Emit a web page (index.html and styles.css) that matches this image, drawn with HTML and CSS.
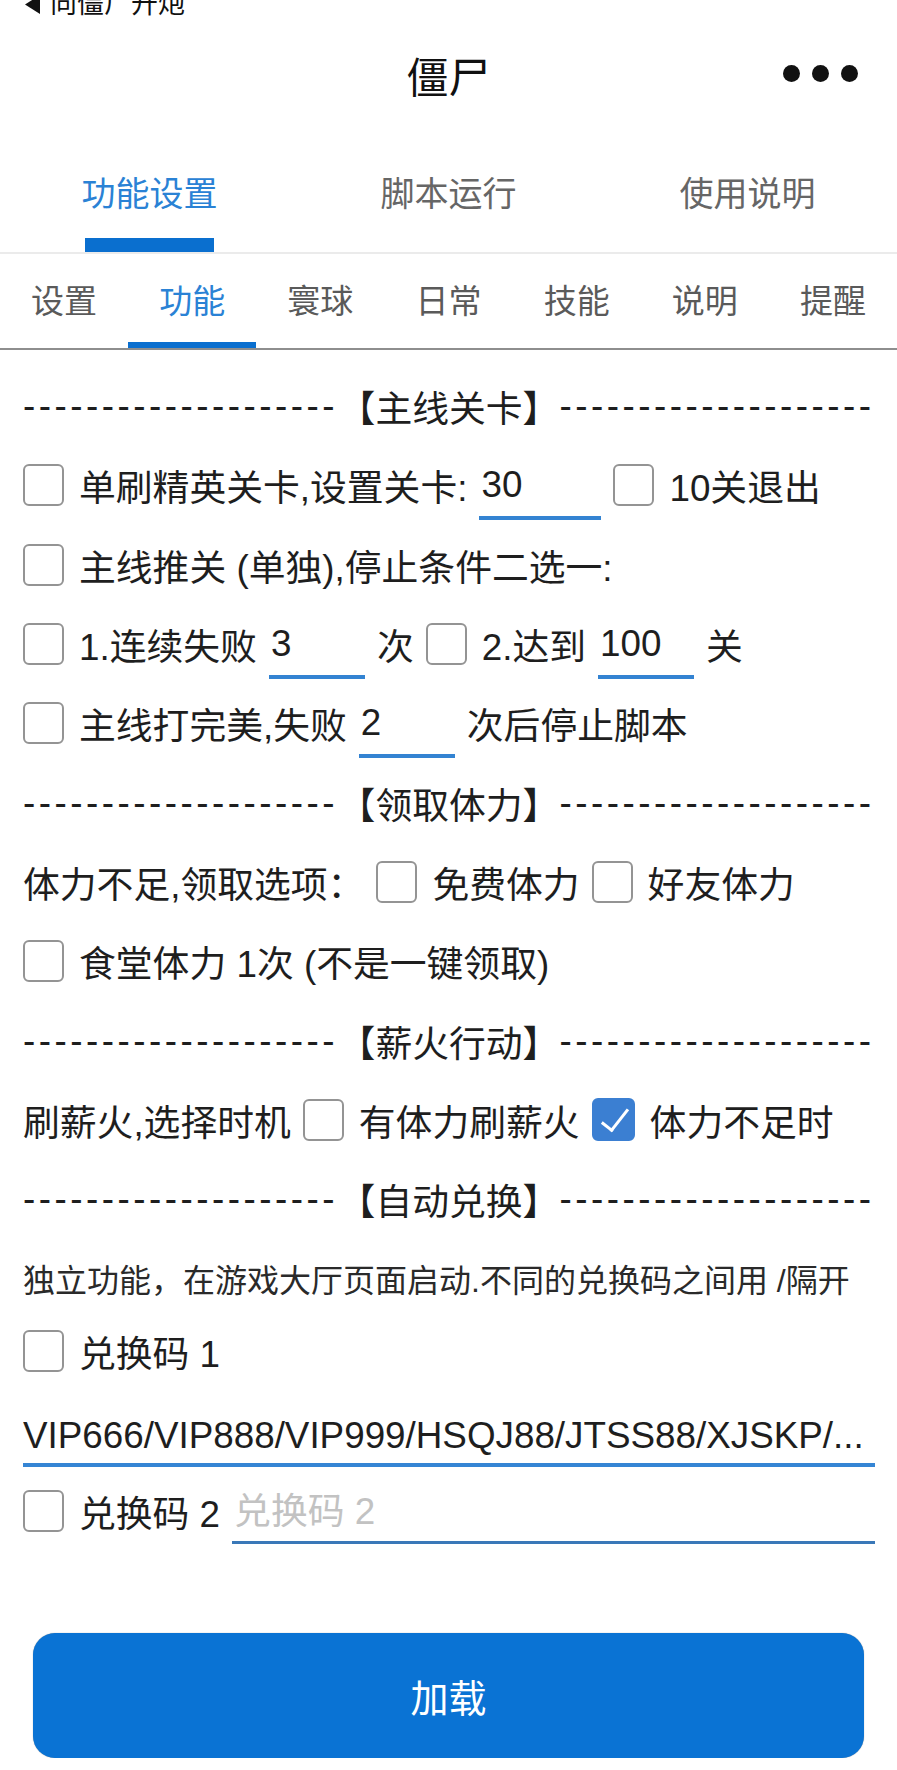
FILE: index.html
```html
<!DOCTYPE html>
<html lang="zh-CN">
<head>
    <meta charset="UTF-8">
    <meta name="viewport" content="width=device-width, initial-scale=1.0">
    <title>僵尸</title>
    <link rel="stylesheet" href="styles.css">
</head>
<body>
    <header class="nav">
        <div class="status">
            <svg class="back" viewBox="0 0 15 19"><polygon points="15,0 15,19 0,9.5"/></svg>
            <span>向僵尸开炮</span>
        </div>
        <div class="titlebar">
            <span></span>
            <h1 class="title">僵尸</h1>
            <div class="more"><i></i><i></i><i></i></div>
        </div>
    </header>

    <!-- top tabs -->
    <nav class="tabs">
        <div class="tab active"><span>功能设置</span><b class="bar"></b></div>
        <div class="tab"><span>脚本运行</span><b class="bar"></b></div>
        <div class="tab"><span>使用说明</span><b class="bar"></b></div>
    </nav>

    <!-- sub tabs -->
    <nav class="subtabs">
        <div class="subtab"><span>设置</span><b class="bar"></b></div>
        <div class="subtab active"><span>功能</span><b class="bar"></b></div>
        <div class="subtab"><span>寰球</span><b class="bar"></b></div>
        <div class="subtab"><span>日常</span><b class="bar"></b></div>
        <div class="subtab"><span>技能</span><b class="bar"></b></div>
        <div class="subtab"><span>说明</span><b class="bar"></b></div>
        <div class="subtab"><span>提醒</span><b class="bar"></b></div>
    </nav>

    <main class="panel">
        <div class="divider"><span class="dash">--------------------</span><span class="divider-title">【主线关卡】</span><span class="dash">--------------------</span></div>
        <div class="row">
            <label class="check"><input type="checkbox"><span>单刷精英关卡,设置关卡:</span></label>
            <input class="num wide" type="text" value="30">
            <label class="check"><input type="checkbox"><span>10关退出</span></label>
        </div>
        <div class="row">
            <label class="check"><input type="checkbox"><span>主线推关 (单独),停止条件二选一:</span></label>
        </div>
        <div class="row">
            <label class="check"><input type="checkbox"><span>1.连续失败</span></label>
            <input class="num" type="text" value="3">
            <span>次</span>
            <label class="check"><input type="checkbox"><span>2.达到</span></label>
            <input class="num" type="text" value="100">
            <span>关</span>
        </div>
        <div class="row">
            <label class="check"><input type="checkbox"><span>主线打完美,失败</span></label>
            <input class="num" type="text" value="2">
            <span>次后停止脚本</span>
        </div>

        <div class="divider"><span class="dash">--------------------</span><span class="divider-title">【领取体力】</span><span class="dash">--------------------</span></div>
        <div class="row">
            <span>体力不足,领取选项：</span>
            <label class="check"><input type="checkbox"><span>免费体力</span></label>
            <label class="check"><input type="checkbox"><span>好友体力</span></label>
        </div>
        <div class="row">
            <label class="check"><input type="checkbox"><span>食堂体力 1次 (不是一键领取)</span></label>
        </div>

        <div class="divider"><span class="dash">--------------------</span><span class="divider-title">【薪火行动】</span><span class="dash">--------------------</span></div>
        <div class="row">
            <span>刷薪火,选择时机</span>
            <label class="check"><input type="checkbox"><span>有体力刷薪火</span></label>
            <label class="check"><input type="checkbox" checked><span>体力不足时</span></label>
        </div>

        <div class="divider"><span class="dash">--------------------</span><span class="divider-title">【自动兑换】</span><span class="dash">--------------------</span></div>
        <div class="desc">独立功能，在游戏大厅页面启动.不同的兑换码之间用 /隔开</div>
        <div class="row code1">
            <label class="check"><input type="checkbox"><span>兑换码 1</span></label>
        </div>
        <input class="code-input" type="text" value="VIP666/VIP888/VIP999/HSQJ88/JTSS88/XJSKP/...">
        <div class="row code2">
            <label class="check"><input type="checkbox"><span>兑换码 2</span></label>
            <input class="code-input small" type="text" placeholder="兑换码 2">
        </div>

        <button class="load" type="button">加载</button>
    </main>
</body>
</html>
```

FILE: styles.css
```css
body {
    margin: 0;
    background: #fff;
    color: #1e1e1e;
    font-family: "Liberation Sans", "Noto Sans CJK SC", sans-serif;
}

/* header */
.status {
    display: flex;
    align-items: center;
    gap: 10px;
    margin-top: -11px;
    height: 30px;
    padding-left: 25px;
    font-size: 27px;
    line-height: 30px;
    color: #111;
}
.status .back {
    width: 15px;
    height: 19px;
    fill: #111;
}
.titlebar {
    display: grid;
    grid-template-columns: 1fr auto 1fr;
    align-items: center;
    height: 119px;
}
.title {
    margin: 0;
    font-size: 42px;
    font-weight: 400;
    line-height: 1;
    color: #111;
}
.more {
    justify-self: end;
    display: flex;
    gap: 11.5px;
    margin-right: 39px;
    margin-top: -10px;
}
.more i {
    width: 17.5px;
    height: 17.5px;
    border-radius: 50%;
    background: #111;
}

/* tabs */
.tabs {
    display: flex;
    border-bottom: 2px solid #ebebeb;
}
.tab {
    flex: 1;
    display: flex;
    flex-direction: column;
    align-items: center;
    padding-top: 36px;
    font-size: 34px;
    line-height: 40px;
    color: #666;
}
.tab .bar {
    width: 129px;
    height: 14px;
    margin-top: 24px;
}
.tab.active {
    color: #2a82d5;
}
.tab.active .bar {
    background: #0a6fcf;
}
.subtabs {
    display: flex;
    border-bottom: 2px solid #8e8e8e;
}
.subtab {
    flex: 1;
    display: flex;
    flex-direction: column;
    text-align: center;
    padding-top: 28px;
    font-size: 33px;
    line-height: 40px;
    color: #5a5a5a;
}
.subtab .bar {
    height: 6px;
    margin-top: 20px;
}
.subtab.active {
    color: #2a82d5;
}
.subtab.active .bar {
    background: #0a6fcf;
}

/* settings panel */
.panel {
    padding: 16.5px 22px 0 23px;
    font-size: 36.8px;
}
.divider,
.row,
.desc {
    display: flex;
    align-items: center;
    height: 79.3px;
    white-space: nowrap;
}
.dash {
    flex: 1;
    overflow: hidden;
    letter-spacing: 3.5px;
}
.divider-title {
    flex: none;
}
.row {
    gap: 12px;
}
.check {
    display: flex;
    align-items: center;
    gap: 15px;
}
.check input {
    appearance: none;
    -webkit-appearance: none;
    position: relative;
    flex: none;
    margin: 0;
    width: 41px;
    height: 42px;
    border: 2px solid #949494;
    border-radius: 6px;
    background: #fff;
}
.check input:checked {
    width: 43px;
    height: 43px;
    background: #3b7fd2;
    border-color: #3b7fd2;
}
.check input:checked::after {
    content: "";
    position: absolute;
    left: 14px;
    top: 3px;
    width: 11px;
    height: 25px;
    border: solid #fff;
    border-width: 0 3px 3px 0;
    transform: rotate(38deg);
}
.num {
    box-sizing: border-box;
    width: 96px;
    height: 70px;
    padding: 4px 2px 0;
    border: none;
    border-bottom: 4px solid #3383d2;
    background: transparent;
    font: inherit;
    color: #1e1e1e;
    outline: none;
}
.num.wide {
    width: 122px;
}
.desc {
    font-size: 32px;
    color: #2a2a2a;
}
.row.code1 {
    height: 66px;
}
.row.code2 {
    height: 88px;
}
.code-input {
    display: block;
    box-sizing: border-box;
    width: 100%;
    height: 83px;
    padding: 25px 0 0;
    border: none;
    border-bottom: 4px solid #3585d4;
    background: transparent;
    font: inherit;
    color: #1e1e1e;
    outline: none;
}
.code-input.small {
    flex: 1;
    width: auto;
    min-width: 0;
    height: 66px;
    padding: 4px 2px 0;
    border-bottom: 3px solid #3a78b8;
}
.code-input::placeholder {
    color: #c2c2c2;
}
.load {
    display: block;
    width: calc(100% - 21px);
    height: 125px;
    margin: 78px 0 0 10px;
    border: none;
    border-radius: 22px;
    background: #0a73d4;
    box-shadow: 0 0 1px rgba(0, 0, 0, 0.45);
    color: #fff;
    font: inherit;
    font-size: 38px;
}
```
